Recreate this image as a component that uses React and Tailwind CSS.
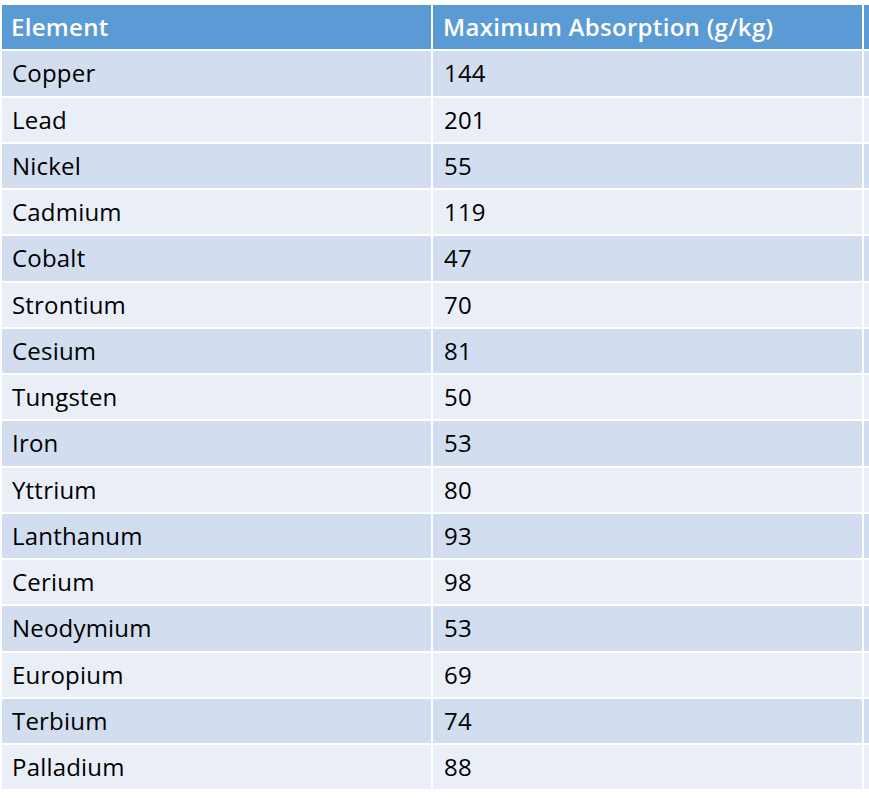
const rows = [
  ['Copper', 144],
  ['Lead', 201],
  ['Nickel', 55],
  ['Cadmium', 119],
  ['Cobalt', 47],
  ['Strontium', 70],
  ['Cesium', 81],
  ['Tungsten', 50],
  ['Iron', 53],
  ['Yttrium', 80],
  ['Lanthanum', 93],
  ['Cerium', 98],
  ['Neodymium', 53],
  ['Europium', 69],
  ['Terbium', 74],
  ['Palladium', 88],
];

export default function App() {
  return (
    <div className="w-[869px] h-[801px] bg-white pt-[5px] pl-[2px] overflow-hidden font-['Open_Sans',sans-serif]">
      <div className="grid grid-cols-[429px_429px_1fr] gap-[2px] auto-rows-[44.25px]">
        {/* Header */}
        <div className="bg-[#5b9bd5] text-white font-semibold text-[24px] tracking-[0.3px] flex items-center pl-[9px]">Element</div>
        <div className="bg-[#5b9bd5] text-white font-semibold text-[24px] tracking-[0.3px] flex items-center pl-[10px]">Maximum Absorption (g/kg)</div>
        <div className="bg-[#5b9bd5]"></div>

        {rows.map(([name, value], i) => {
          const bg = i % 2 === 0 ? 'bg-[#d2deef]' : 'bg-[#eaeff7]';
          return [
            <div key={name + 'a'} className={`${bg} text-black text-[24px] tracking-[0.2px] flex items-center pl-[10px]`}>{name}</div>,
            <div key={name + 'b'} className={`${bg} text-black text-[24px] tracking-[0.2px] flex items-center pl-[11px]`}>{value}</div>,
            <div key={name + 'c'} className={bg}></div>,
          ];
        })}
      </div>
    </div>
  );
}
